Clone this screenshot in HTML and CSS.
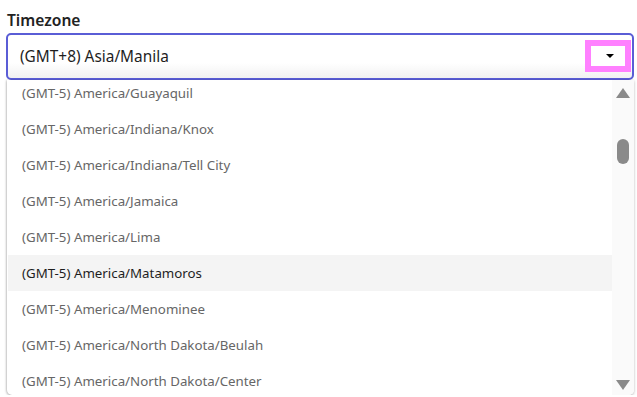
FILE: index.html
```html
<!DOCTYPE html>
<html>
<head>
<meta charset="utf-8">
<link rel="stylesheet" href="styles.css">
</head>
<body>
<div class="field">
  <div class="label">Timezone</div>
  <div class="select">
    <span class="value">(GMT+8) Asia/Manila</span>
    <span class="toggle"><span class="caret"></span></span>
  </div>
  <div class="menu">
    <div class="viewport">
      <div class="options">
        <div class="option">(GMT-5) America/Guayaquil</div>
        <div class="option">(GMT-5) America/Indiana/Knox</div>
        <div class="option">(GMT-5) America/Indiana/Tell City</div>
        <div class="option">(GMT-5) America/Jamaica</div>
        <div class="option">(GMT-5) America/Lima</div>
        <div class="option active">(GMT-5) America/Matamoros</div>
        <div class="option">(GMT-5) America/Menominee</div>
        <div class="option">(GMT-5) America/North Dakota/Beulah</div>
        <div class="option">(GMT-5) America/North Dakota/Center</div>
      </div>
    </div>
    <div class="scrollbar">
      <span class="arrow up"></span>
      <span class="thumb"></span>
      <span class="arrow down"></span>
    </div>
  </div>
</div>
</body>
</html>
```
FILE: styles.css
```css
html, body {
  margin: 0;
  padding: 0;
  background: #ffffff;
}
body {
  font-family: "Noto Sans", "Open Sans", sans-serif;
  color: #222;
}
.field {
  width: 628px;
  padding: 10px 0 0 6px;
}
.label {
  font-size: 15.6px;
  font-weight: 600;
  color: #222;
  line-height: 21px;
  padding-left: 1px;
  height: 23px;
}
.select {
  box-sizing: border-box;
  height: 47px;
  border: 2px solid #5a5dd6;
  border-radius: 5px;
  background: linear-gradient(#ffffff 65%, #f1f1f1);
  display: flex;
  align-items: center;
  padding-left: 12px;
}
.value {
  flex: 1;
  font-size: 15.4px;
  color: #1e1e1e;
  padding-bottom: 1px;
}
.toggle {
  box-sizing: border-box;
  width: 46px;
  height: 32px;
  border: 6px solid #ff80ff;
  background: #ffffff;
  margin-right: 1px;
  margin-top: -1px;
  display: flex;
  align-items: center;
  justify-content: center;
}
.caret {
  width: 0;
  height: 0;
  border-left: 4px solid transparent;
  border-right: 4px solid transparent;
  border-top: 4px solid #000;
  margin-left: 3px;
}
.menu {
  margin-left: 1px;
  height: 315px;
  display: flex;
  background: #fff;
  border-radius: 0 0 5px 5px;
  box-shadow: 0 1px 3px rgba(0,0,0,0.28), -1px 0 2px rgba(0,0,0,0.12);
  overflow: hidden;
}
.viewport {
  flex: 1;
  overflow: hidden;
  padding-left: 1px;
}
.options {
  margin-top: -5px;
}
.option {
  height: 36px;
  line-height: 36px;
  padding-left: 14px;
  font-size: 13.3px;
  color: #666;
  white-space: nowrap;
}
.option.active {
  background: #f4f4f4;
  color: #1e1e1e;
}
.scrollbar {
  width: 22px;
  background: #fafafa;
  display: flex;
  flex-direction: column;
  align-items: center;
  padding-top: 8px;
  padding-bottom: 5px;
  box-sizing: border-box;
}
.arrow {
  width: 0;
  height: 0;
  border-left: 7px solid transparent;
  border-right: 7px solid transparent;
}
.arrow.up {
  border-bottom: 10px solid #8a8a8a;
}
.arrow.down {
  border-top: 10px solid #8a8a8a;
  margin-top: auto;
}
.thumb {
  width: 12px;
  height: 25px;
  border-radius: 6px;
  background: #8a8a8a;
  margin-top: 41px;
}
```
